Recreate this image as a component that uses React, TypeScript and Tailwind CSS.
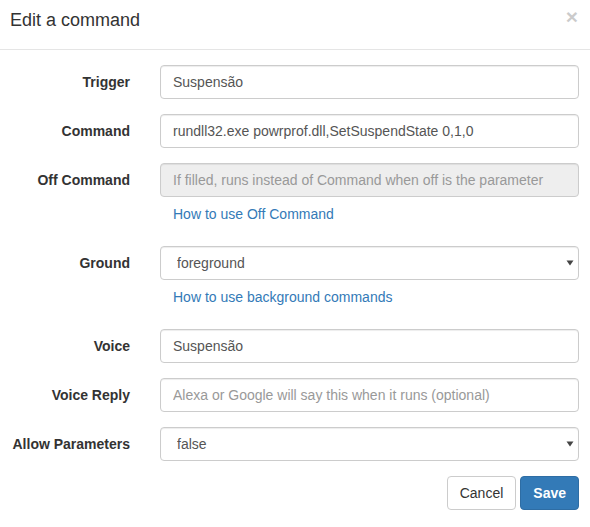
import React from 'react'

const font = { fontFamily: '"Liberation Sans", Arial, Helvetica, sans-serif' }

const baseInput =
  'block w-full h-[34px] px-[12px] border border-[#ccc] rounded-[4px] text-[14px] text-[#555] placeholder:text-[#999] outline-none shadow-[inset_0_1px_1px_rgba(0,0,0,0.075)]'

const inputClass = `${baseInput} bg-white`

const Row = ({ label, children }: { label: string; children: React.ReactNode }) => (
  <div className="flex items-start mb-[15px]">
    <label className="w-[130px] shrink-0 text-right pt-[7px] leading-[20px] text-[14px] font-bold text-[#333]">
      {label}
    </label>
    <div className="flex-1 ml-[30px]">{children}</div>
  </div>
)

const Select = ({ value, options }: { value: string; options: string[] }) => (
  <div className="relative">
    <select defaultValue={value} className={`${inputClass} appearance-none pl-[16px]`}>
      {options.map((o) => (
        <option key={o}>{o}</option>
      ))}
    </select>
    <svg className="absolute right-[5px] top-[14px] pointer-events-none" width="8" height="6" viewBox="0 0 8 6">
      <path d="M0.5 0.5 H7.5 L4 5.5 Z" fill="#444" />
    </svg>
  </div>
)

const HelpLink = ({ children }: { children: React.ReactNode }) => (
  <div className="mt-[7px] mb-[7px] pl-[13px] leading-[20px]">
    <a href="#" className="text-[14px] text-[#337ab7] no-underline">
      {children}
    </a>
  </div>
)

export default function App() {
  return (
    <div className="w-[590px] min-h-[527px] bg-white text-[#333]" style={font}>
      <div className="h-[50px] border-b border-[#e5e5e5] flex items-start justify-between pl-[10px] pr-[12px]">
        <h4 className="text-[18px] leading-[21px] pt-[10px] font-normal text-[#333]">Edit a command</h4>
        <button className="text-[21px] font-bold leading-[21px] pt-[6px] text-black opacity-20">×</button>
      </div>

      <div className="pt-[15px] pr-[11px]">
        <Row label="Trigger">
          <input className={inputClass} defaultValue="Suspensão" />
        </Row>
        <Row label="Command">
          <input className={inputClass} defaultValue="rundll32.exe powrprof.dll,SetSuspendState 0,1,0" />
        </Row>
        <Row label="Off Command">
          <input
            disabled
            className={`${baseInput} bg-[#eee] cursor-not-allowed`}
            placeholder="If filled, runs instead of Command when off is the parameter"
          />
          <HelpLink>How to use Off Command</HelpLink>
        </Row>
        <Row label="Ground">
          <Select value="foreground" options={['foreground', 'background']} />
          <HelpLink>How to use background commands</HelpLink>
        </Row>
        <Row label="Voice">
          <input className={inputClass} defaultValue="Suspensão" />
        </Row>
        <Row label="Voice Reply">
          <input className={inputClass} placeholder="Alexa or Google will say this when it runs (optional)" />
        </Row>
        <Row label="Allow Parameters">
          <Select value="false" options={['false', 'true']} />
        </Row>

        <div className="flex justify-end gap-[4px]">
          <button className="h-[34px] px-[12px] border border-[#ccc] rounded-[4px] bg-white text-[14px] text-[#333]">
            Cancel
          </button>
          <button className="h-[34px] px-[12px] border border-[#2e6da4] rounded-[4px] bg-[#337ab7] text-[14px] font-bold text-white">
            Save
          </button>
        </div>
      </div>
    </div>
  )
}
